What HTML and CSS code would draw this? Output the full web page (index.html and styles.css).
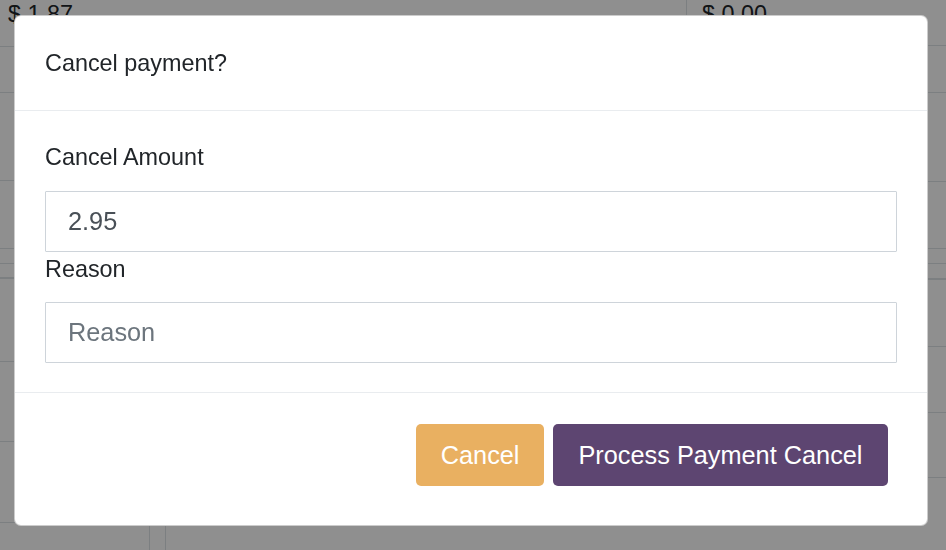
FILE: index.html
```html
<!DOCTYPE html>
<html lang="en">
<head>
<meta charset="utf-8">
<title>Cancel payment</title>
<link rel="stylesheet" href="styles.css">
</head>
<body>
<div class="page">
  <div class="panel panel-left">
    <div class="row r-a"><span class="amount">$ 1.87</span></div>
    <div class="row r-b"></div>
    <div class="row r-c"></div>
    <div class="row r-d"></div>
    <div class="row r-e"></div>
    <div class="row r-f"></div>
    <div class="row r-g"></div>
    <div class="row r-h"></div>
    <div class="row r-i"></div>
    <div class="cells">
      <div class="cell c-1"></div>
      <div class="cell c-2"></div>
      <div class="cell c-3"></div>
    </div>
  </div>
  <div class="panel panel-right">
    <div class="row s-a"><span class="amount amount-right">$ 0.00</span></div>
    <div class="row s-b"></div>
    <div class="row s-c"></div>
    <div class="row s-d"></div>
    <div class="row s-e"></div>
    <div class="row s-f"></div>
    <div class="row s-g"></div>
    <div class="row s-h"></div>
    <div class="row s-i"></div>
  </div>
</div>

<div class="backdrop"></div>

<div class="modal" role="dialog" aria-labelledby="modal-title">
  <div class="modal-header">
    <h5 class="modal-title" id="modal-title">Cancel payment?</h5>
  </div>
  <div class="modal-body">
    <label class="field-label" for="amount">Cancel Amount</label>
    <input class="form-control" id="amount" type="text" value="2.95">
    <label class="field-label" for="reason">Reason</label>
    <input class="form-control" id="reason" type="text" placeholder="Reason">
  </div>
  <div class="modal-footer">
    <button class="btn btn-cancel" type="button">Cancel</button>
    <button class="btn btn-process" type="button">Process Payment Cancel</button>
  </div>
</div>
</body>
</html>
```

FILE: styles.css
```css
* {
  box-sizing: border-box;
}

html, body {
  margin: 0;
  padding: 0;
  height: 100%;
  overflow: hidden;
}

body {
  background: #ffffff;
  font-family: "Liberation Sans", Arial, sans-serif;
  font-size: 23.4px;
  color: #212529;
}

/* ---------- underlying page ---------- */
.page {
  display: flex;
  height: 550px;
}

.panel {
  display: flex;
  flex-direction: column;
}

.panel-left {
  width: 686px;
}

.panel-right {
  flex: 1;
}

.row {
  border-bottom: 1px solid #dee2e6;
  flex: none;
}

.panel-right .row {
  border-left: 1px solid #dee2e6;
}

.amount {
  display: block;
  line-height: 28px;
  padding-left: 8px;
  color: #212529;
}

.amount-right {
  padding-left: 15px;
}

.r-a { height: 47px; }
.r-b { height: 46px; }
.r-c { height: 88px; }
.r-d { height: 68px; }
.r-e { height: 15px; }
.r-f { height: 15px; border-bottom-width: 2px; }
.r-g { height: 83px; }
.r-h { height: 80px; }
.r-i { height: 81px; }

.cells {
  display: flex;
  flex: 1;
}

.cell {
  flex: none;
}

.c-1 { width: 150px; border-right: 1px solid #dee2e6; }
.c-2 { width: 16px; border-right: 1px solid #dee2e6; }
.c-3 { flex: 1; }

.s-a { height: 46px; }
.s-b { height: 47px; }
.s-c { height: 89px; }
.s-d { height: 67px; }
.s-e { height: 15px; }
.s-f { height: 16px; border-bottom-width: 2px; }
.s-g { height: 67px; }
.s-h { height: 66px; }
.s-i { height: 65px; }

/* ---------- overlay ---------- */
.backdrop {
  position: fixed;
  inset: 0;
  background: rgba(0, 0, 0, 0.44);
}

.modal {
  position: fixed;
  left: 14px;
  top: 15px;
  width: 914px;
  height: 511px;
  background: #ffffff;
  border: 1px solid rgba(0, 0, 0, 0.2);
  border-radius: 7px;
  display: flex;
  flex-direction: column;
  overflow: hidden;
}

.modal-header {
  padding: 30px 30px 29px;
  border-bottom: 1px solid #e9ecef;
}

.modal-title {
  margin: 0;
  font-size: 23.4px;
  font-weight: 400;
  line-height: 35px;
  color: #212529;
}

.modal-body {
  padding: 29px 30px 29px;
  display: flex;
  flex-direction: column;
}

.field-label {
  display: block;
  line-height: 34px;
  margin-bottom: 16.5px;
  color: #212529;
}

.form-control {
  display: block;
  width: 100%;
  height: 61px;
  padding: 0 22px;
  font-family: "Liberation Sans", Arial, sans-serif;
  font-size: 25.3px;
  color: #495057;
  background: #ffffff;
  border: 1px solid #ced4da;
  border-radius: 1px;
  outline: none;
}

.form-control::placeholder {
  color: #6c757d;
  opacity: 1;
}

.modal-footer {
  flex: 1;
  border-top: 1px solid #e9ecef;
  padding: 31px 39px 0;
  display: flex;
  justify-content: flex-end;
  align-items: flex-start;
  gap: 9px;
}

.btn {
  height: 62px;
  padding: 0 24.5px;
  font-family: "Liberation Sans", Arial, sans-serif;
  font-size: 25.3px;
  color: #ffffff;
  border: none;
  border-radius: 5px;
  display: flex;
  align-items: center;
  cursor: pointer;
}

.btn-cancel {
  background: #e9b061;
}

.btn-process {
  background: #5d4571;
  padding: 0 25.5px;
}
```
